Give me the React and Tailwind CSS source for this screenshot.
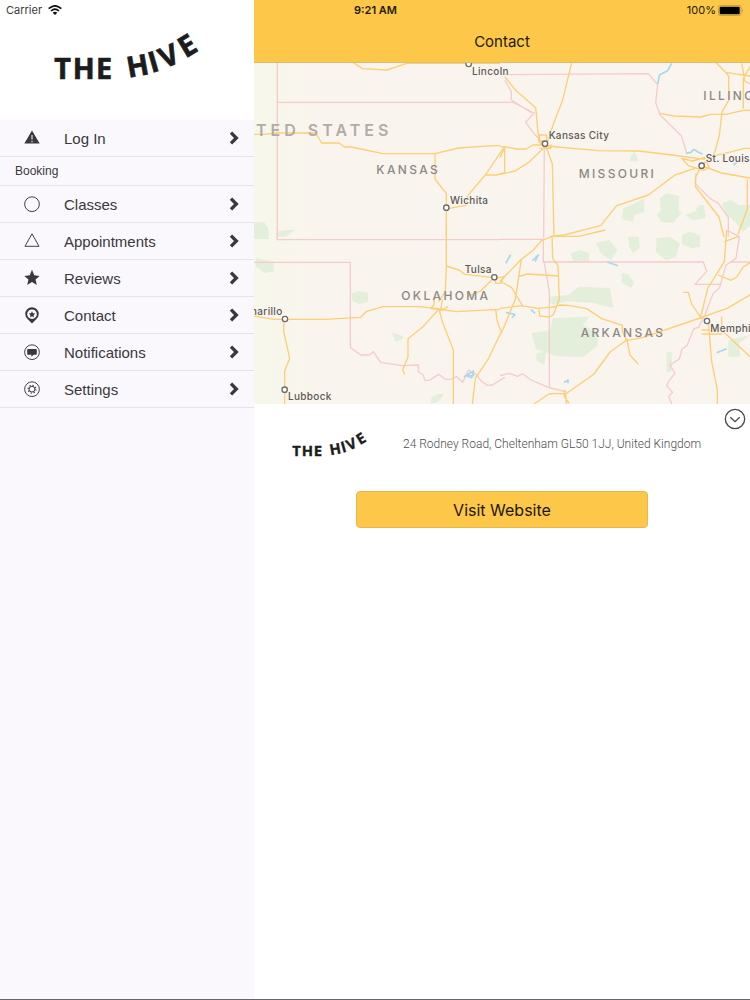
import React from "react";

function HiveLogo({ className }) {
  return (
    <svg
      viewBox="160 92 440 148"
      className={`overflow-visible ${className}`}
      role="img"
      aria-label="The Hive"
      fill="#1c1c1e"
      stroke="#1c1c1e"
      strokeWidth="2"
      fontFamily="'Open Sans', 'Noto Sans', sans-serif"
      fontWeight="700"
      fontSize="86"
    >
      <text x="161" y="237">T</text>
      <text x="216" y="237">H</text>
      <text x="286" y="237">E</text>
      <text transform="translate(383 232) rotate(-10)">H</text>
      <text transform="translate(452 218) rotate(-16)">I</text>
      <text transform="translate(490 206) rotate(-24)">V</text>
      <text transform="translate(554 174) rotate(-31)">E</text>
    </svg>
  );
}

const stroke = { fill: "none", stroke: "currentColor", strokeWidth: 3 };

const icons = {
  login: (
    <>
      <path d="M24 0 48 41H0Z" fill="currentColor" />
      <path d="M24 14v14M24 32v5" stroke="#d9d8dd" strokeWidth="4" />
    </>
  ),
  circle: <circle cx="24" cy="24" r="23" {...stroke} />,
  triangle: <path d="M24 1 46 40H2Z" {...stroke} />,
  star: <path d="m24-2 7 17 17 2-13 11 4 17-15-9-15 9 4-17L0 17l17-2Z" fill="currentColor" />,
  pin: (
    <>
      <path d="M24 50 10 36a21 21 0 1 1 28 0Z" fill="currentColor" />
      <circle cx="24" cy="21" r="15" fill="#fbf9fd" />
      <path d="m24 12 3 6 7 1-5 5 1 7-6-4-6 4 1-7-5-5 7-1Z" fill="currentColor" />
    </>
  ),
  message: (
    <>
      <circle cx="24" cy="24" r="23" {...stroke} />
      <path d="M12 14h24q3 0 3 3v12q0 3-3 3h-7l-7 6v-6H12q-3 0-3-3V17q0-3 3-3Z" fill="currentColor" />
    </>
  ),
  gear: (
    <>
      <circle cx="24" cy="24" r="23" {...stroke} />
      <circle cx="24" cy="24" r="9" {...stroke} />
      <circle cx="24" cy="24" r="12" {...stroke} strokeWidth="4" strokeDasharray="4 5.4" />
    </>
  ),
};

function MenuRow({ icon, label }) {
  return (
    <a href="#" className="flex h-[37px] items-center border-b border-[#e6e4e9] pr-[15px] pl-6 text-[#39383c]">
      <svg viewBox="-1 -1 50 52" className="h-[17px] w-4 shrink-0 overflow-visible" aria-hidden="true">
        {icons[icon]}
      </svg>
      <span className="ml-6 flex-1 pt-px text-[15px] leading-5">{label}</span>
      <svg viewBox="0 0 30 42" className="h-[14px] w-[10px]" aria-hidden="true">
        <path d="m6 5 16 16L6 37" fill="none" stroke="currentColor" strokeWidth="10" />
      </svg>
    </a>
  );
}

const rows = [
  ["circle", "Classes"],
  ["triangle", "Appointments"],
  ["star", "Reviews"],
  ["pin", "Contact"],
  ["message", "Notifications"],
  ["gear", "Settings"],
];

function Region({ x, y, parks, borders, water, roads }) {
  return (
    <g transform={`translate(${x} ${y})`} fill="none" strokeLinejoin="round">
      <path d={parks} fill="#e3eedb" />
      <path d={borders} stroke="#f5ccca" strokeWidth="4" />
      <path d={water} stroke="#a9d8ee" strokeWidth="5" />
      <path d={roads} stroke="#fbcf75" strokeWidth="4" />
    </g>
  );
}

const cities = [
  [644, 3, 654, 36, "Lincoln"],
  [577, 434, 588, 424, "Wichita"],
  [873, 242, 884, 229, "Kansas City"],
  [1343, 308, 1355, 296, "St. Louis"],
  [721, 643, 632, 631, "Tulsa"],
  [93, 768, -40, 756, "Amarillo"],
  [92, 980, 102, 1011, "Lubbock"],
  [1359, 774, 1369, 807, "Memphis"],
];

const states = [
  [367, 333, "KANSAS"],
  [974, 344, "MISSOURI"],
  [1348, 110, "ILLINOIS"],
  [442, 711, "OKLAHOMA"],
  [980, 821, "ARKANSAS"],
];

function RegionMap() {
  return (
    <svg
      viewBox="0 0 1488 1023"
      preserveAspectRatio="xMidYMid slice"
      className="block h-[341px] w-full bg-[#f9f5ee]"
      role="img"
      aria-label="Map of the central United States"
      fontFamily="Inter, Roboto, sans-serif"
    >
      <defs>
        <linearGradient id="plains">
          <stop offset="0" stopColor="#f7f7ea" />
          <stop offset="1" stopColor="#f9f5ee" />
        </linearGradient>
      </defs>
      <path d="M0 0H180V1023H0Z" fill="url(#plains)" />
      <Region
        x={0}
        y={-9}
        parks="M0 487h30l14 20v30H0ZM75 515l48-6-25 20H75Z"
        borders="M70 0V540M70 127H738"
        water=""
        roads="M298 8l28 18 72 4 25-8 35-12H738M0 223h28l42-4H185l18 30h52l17 12h20l95 20H543l70-17 105-7h20M543 282v75l34 44V530M750 262l-54 80-54 64-6 30-55 10M696 345h30l24-6"
      />
      <Region
        x={738}
        y={-9}
        parks="M392 290l12-16 12 30h-28ZM370 445l35-15 28-15v40l-30 10-5 20-33-8ZM480 415l20-15 38 8-3 45 10 5-25 30-35-2-15-22 12-12ZM555 465l30-10 12-20h15l5 40-40 5ZM665 430l30-10 20 15h35v60l-20 20-25-30-25-20Z"
        borders="M0 44l445-3 28 33-6 54 13 36 65 65 15 50M0 127h40l35 18 27 14-25 28 25 34 31 32-2 280M14 60l20 35v25l60 38M588 340l-3 30 45 45 25 15 30 42v58"
        water="M515 10l-12 22-24 12-6 28M558 280l15-3 8-9 13 8 14 6M700 315l14-10"
        roads="M14 50l33 41 60 52 10 104 20 10 20 55 5 215M215 8l-28 116-24 60-22 65M0 260h14l35 7h30l20-12h32l40 6 125 11 120 1 100 12 100 13M0 343l45-10 40-25 50-48M14 260v80M0 292l14-28M640 0l35 35 11 13v73l-20 35-8 70-14 52-28 28M680 38l70 10M480 160l42 8 80 3 30-8h45l54-12h20M605 315l40-28 90-22h15M605 317l60 22 85 15M742 358v90l-28 75M585 325l-60 20-80 60-95 32-48 60-110 28-30 3M605 317l-18 34v30l70 90 15 60M545 295l20 22 45 14 18-8-15-30-35 10zM750 20l-20 36v90M725 10l10 55 15 5M118 225h22v18h-22zM118 265h35v-12M118 240l35 25"
      />
      <Region
        x={0}
        y={501}
        parks="M0 0h42v27H0ZM73 3l40-3-20 20H73ZM5 85l55 10-2 30-26 3L5 110ZM292 190l20-7 30 5v28l-25 6-22-10ZM414 309l25 6 12 10-26 10ZM533 500l20-8h18l-20 24-21 5Z"
        borders="M70 -8V29H738M0 97H289v256l32 22h25l12-10 22 32 65 10 48-2v20l15 10 4 16h14l28-18 20 15h16l18-8 18 17 18-37 24 14 12 18 20 14 15-1 38-23"
        water="M629 441l30-18-5 20-15-5 22-1"
        roads="M577 -8V105l-3 80-20 30M577 108l38 12 17 13 88 10-40 40-40 16M0 258l60 10H210l110-6 18-18 50-14H500l55 7 50 8 133-7M90 268l-1 35 18 82-15 38v98M555 237l-50 55-43 34v55l-16 38 6 15M555 237l10 38 33 85v162M725 240l5 35 12 30-38 80-40 60-9 77M540 205v20l-10 10 34 5 18-10M565 208l-5 35M725 145l25-5-10 20H725Z"
      />
      <Region
        x={738}
        y={501}
        parks="M212 70l30-10 25 10v25h-47ZM288 40l40-10 24 30-20 30-30-20ZM385 20h30l5 30-20 20-12-20ZM470 25l40-4 30 20-12 40-30 10-30-25ZM545 15l25-10 30 10v35l-25 5-28-12ZM365 130l20 3 18 25-10 15-28-15ZM150 200l55-5 30-25 95 4 10 60-60-15-80-5-40 10-15-12ZM95 310l55-10 8-35 110-5-20 25 45 22v40l-45 35-80-4-60-20ZM110 370l28-5-5 40-25-15ZM500 367h15v55l-15 5ZM685 330l65-15-32 25 2 40h-35Z"
        borders="M0 28H130v68H610l10 28-35 39h80M750 96h-60M132 95l16 90v290M0 437l28-7 25 9 15-8 25 19 52 22 55 14M680 0l38 20-10 65-30 20-20 70-18 15-12 30-12 32-20 40-15 5-20 50-15 10-8 30-28 18 15 25-20 25-5 12 18 20-12 12 10 24"
        water="M17 100l15-26M97 92l18-17-10 20M322 96l32 11M18 247l27 7-10 10M93 238l12 12M192 458l12-8v10M650 368l30-12"
        roads="M0 154l64-66 36-28 24-28 32-13h80l80-19M64 88l-18 120-38 92-8 15M55 140l28-8 93 6M0 153l35 20 35 58M156 15l2 70 16 22 4 100-18 48-12 6-28-3-4-20M0 235l64-8 50 8 46-4 20-6 25 1 55 10 45 30 62 20v18l13 28 50-10 170-58 55-20 25-8 75-44M550 187h15l10 35 30 45M680 0l-7 95-50 80-22 90M673 35l42-15M655 135l38 16 17-10 20-30 20-13M380 330l-50 36-48 66-85 60-30-2-20 2-45 30M197 492l2 30M380 325l10 50 25 28M625 275l10 120 17 85v42M605 300h60l85 80M605 312h60M665 260v50M193 480v20l15 20"
      />

      <text x="6" y="219" fontSize="48" fontWeight="600" fill="#b1aca8" className="tracking-[12px]">
        TED STATES
      </text>
      {states.map(([x, y, name]) => (
        <text key={name} x={x} y={y} fontSize="36" fontWeight="500" fill="#8c8885" className="tracking-[7px]">
          {name}
        </text>
      ))}
      {cities.map(([cx, cy, x, y, name]) => (
        <g key={name}>
          <circle cx={cx} cy={cy} r="8" fill="#fff" stroke="#6e6a68" strokeWidth="4" />
          <text
            x={x}
            y={y}
            fontSize="30"
            fontWeight="500"
            fill="#5c5856"
            stroke="#f9f5ee"
            strokeWidth="5"
            paintOrder="stroke"
            className="tracking-[1px]"
          >
            {name}
          </text>
        </g>
      ))}
    </svg>
  );
}

export default function App() {
  return (
    <div className="flex min-h-screen border-b border-[#66656a] bg-white font-['Liberation_Sans',Arial,sans-serif]">
      <aside className="w-[254px] shrink-0 bg-[#faf8fc]">
        <div className="flex h-[120px] flex-col bg-white">
          <div className="flex h-5 items-center gap-[6px] pl-[6px] font-[Inter,sans-serif] text-[11px] leading-4 text-[#3a3a3c]">
            <span>Carrier</span>
            <svg viewBox="0 0 42 30" className="h-[10px] w-[14px]" aria-hidden="true">
              <g fill="none" stroke="#111" strokeWidth="5">
                <path d="M2 11Q21-6 40 11" />
                <path d="M9 18q12-11 24 0" />
              </g>
              <path d="m14 23q7-6 14 0l-7 7Z" fill="#111" />
            </svg>
          </div>
          <HiveLogo className="mx-auto mt-[11px] w-[147px]" />
        </div>
        <nav>
          <MenuRow icon="login" label="Log In" />
          <h2 className="flex h-[29px] items-center border-b border-[#e6e4e9] pl-[15px] text-xs text-[#39383c]">
            Booking
          </h2>
          {rows.map(([icon, label]) => (
            <MenuRow key={label} icon={icon} label={label} />
          ))}
        </nav>
      </aside>

      <main className="min-w-0 flex-1">
        <header className="h-[63px] border-b border-[#d9bd74] bg-[#fdc84a] font-[Inter,sans-serif] text-[#231a08]">
          <div className="flex h-5 items-center justify-between pr-[6px] pl-[100px] text-[11px] leading-4">
            <span className="font-semibold">9:21 AM</span>
            <span className="flex items-center gap-[2px]">
              100%
              <svg viewBox="0 0 78 33" className="h-[11px] w-[26px]" aria-hidden="true">
                <rect x="1" y="1" width="68" height="31" rx="7" fill="none" stroke="#a68433" strokeWidth="2" />
                <rect x="5" y="5" width="60" height="23" rx="3" fill="#000" />
                <path d="M72 11q5 5 0 11Z" fill="#a68433" />
              </svg>
            </span>
          </div>
          <h1 className="mt-3 text-center text-[15px] leading-5">Contact</h1>
        </header>
        <RegionMap />
        <section>
          <div className="flex justify-end pt-1 pr-1">
            <button type="button" aria-label="Collapse details" className="text-[#4a4a4c]">
              <svg viewBox="0 0 66 66" className="block size-[22px]" aria-hidden="true">
                <g fill="none" stroke="currentColor" strokeWidth="4">
                  <circle cx="33" cy="33" r="29" />
                  <path d="m19 28 14 13 14-13" />
                </g>
              </svg>
            </button>
          </div>
          <div className="flex items-center pr-6 pl-[38px]">
            <HiveLogo className="w-[76px] shrink-0" />
            <address className="ml-[35px] font-[Roboto,sans-serif] text-xs leading-7 font-light text-[#4e4e50] not-italic">
              24 Rodney Road, Cheltenham GL50 1JJ, United Kingdom
            </address>
          </div>
          <button
            type="button"
            className="mx-auto mt-[33px] block h-[37px] w-[59%] rounded border border-[#eab84a] bg-[#fdc84a] font-[Inter,sans-serif] text-base leading-5 text-[#1d1608]"
          >
            Visit Website
          </button>
        </section>
      </main>
    </div>
  );
}
